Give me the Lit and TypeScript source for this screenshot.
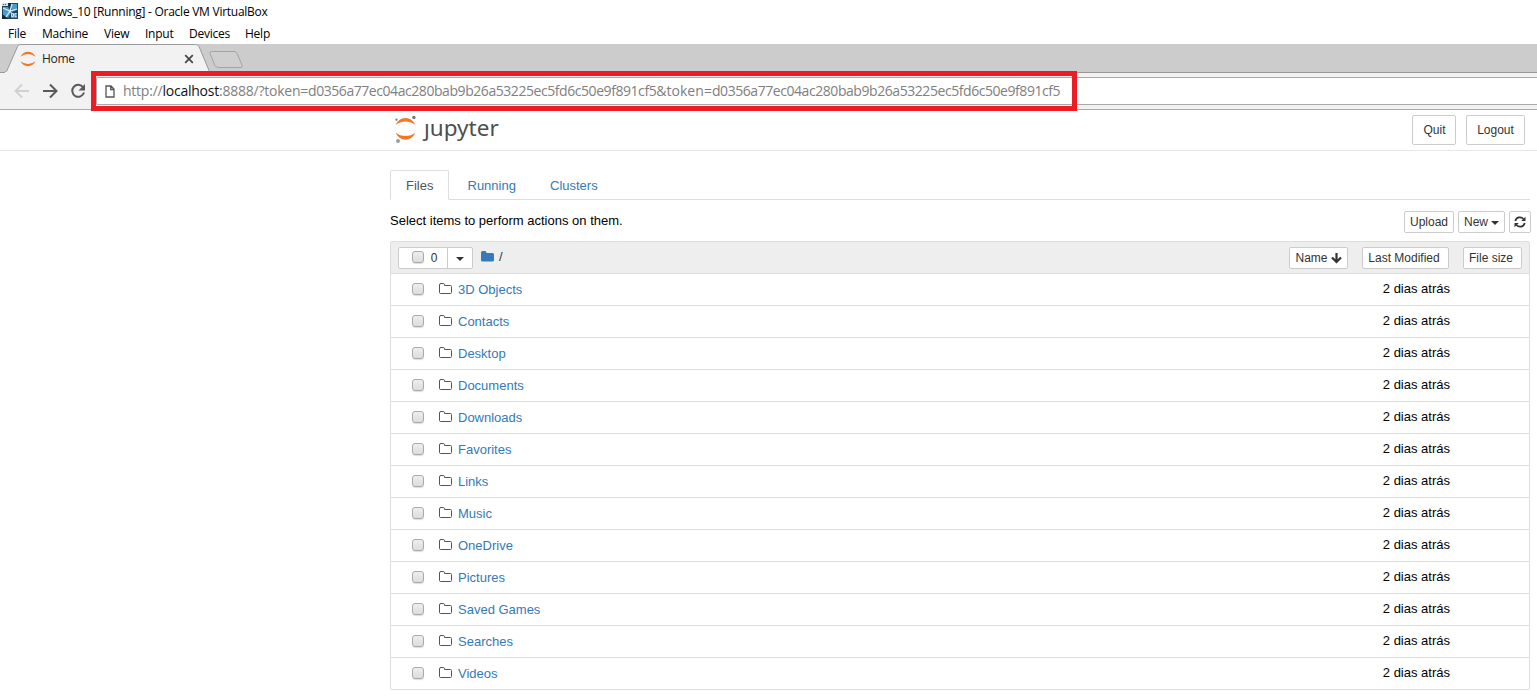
import { LitElement, html, css, svg } from "lit";
import { customElement } from "lit/decorators.js";

const FOLDERS = ["3D Objects", "Contacts", "Desktop", "Documents", "Downloads", "Favorites", "Links", "Music", "OneDrive", "Pictures", "Saved Games", "Searches", "Videos"];
const TOKEN = "d0356a77ec04ac280bab9b26a53225ec5fd6c50e9f891cf5";
const MENUS: [string, number][] = [["File", 34], ["Machine", 62], ["View", 41], ["Input", 44], ["Devices", 56], ["Help", 40]];

const reset = css`
  :host { display: block; box-sizing: border-box; }
  *, *::before, *::after { box-sizing: border-box; }
  svg { display: block; flex: none; }
`;

@customElement("vm-titlebar")
export class VmTitlebar extends LitElement {
  static styles = [reset, css`
    :host { background: #fff; color: #000; height: 44px; font: 12px/16px "Open Sans", "Noto Sans", sans-serif; }
    .title { display: flex; height: 24px; padding: 3px 0 0 2px; gap: 5px; }
    .name { font-size: 12px; letter-spacing: -0.26px; line-height: 17px; white-space: nowrap; }
    .menu { display: flex; height: 20px; padding: 2px 0 0 8px; }
    .item { font-size: 12px; letter-spacing: -0.24px; white-space: nowrap; }
  `];
  render() {
    return html`
      <div class="title">
        <svg width="16" height="16" viewBox="0 0 16 16">
          <path fill="#1d4566" d="M0 0h16v16H0z"/>
          <path fill="#4a9acb" d="M1 4h5l3 5-3 6H1zM9 1h6v6l-5 2z"/>
          <path fill="#12283c" d="M0 11l6 4v1H0zM6 0h3l-1 5z"/>
          <path fill="none" stroke="#d5edf8" stroke-width="1.300" d="M10 1L8 8l-4 6M1 5l7 3 7-2M8 8l2 3"/>
          <path fill="#5c8db0" d="M9 10h6v5H9z"/>
          <path fill="none" stroke="#d0e2ee" d="M9.500 10.500h2v3h-2zM14.500 10.500h-1.500v3h1.500"/>
          <path fill="#cfdce5" d="M0 0h6v3H0z"/><path fill="#50677a" d="M1 1h1v1H1zM3 1h1v1H3z"/>
        </svg>
        <span class="name">Windows_10 [Running] - Oracle VM VirtualBox</span>
      </div>
      <div class="menu">${MENUS.map(([t, w]) => html`<span class="item" style="width:${w}px">${t}</span>`)}</div>`;
  }
}

@customElement("browser-chrome")
export class BrowserChrome extends LitElement {
  static styles = [reset, css`
    :host { position: relative; height: 66px; font-family: "Open Sans", "Noto Sans", sans-serif; }
    .strip { position: relative; height: 29px; background: #ccc; border-bottom: 1px solid #999; display: flex; align-items: center; padding-left: 20px; }
    .shape { position: absolute; left: 0; top: 0; }
    .fav, .label, .close { position: relative; }
    .label { margin-left: 6px; width: 142px; font-size: 12px; letter-spacing: -0.3px; color: #222; line-height: 16px; padding-top: 2px; }
    .close, .fav { margin-top: 2px; }
    .bar { height: 37px; background: #f2f2f2; border-bottom: 1px solid #aaa; display: flex; padding: 4px 0 0 14px; }
    .nav { margin-top: 6px; margin-right: 12px; }
    .omni { flex: 1; height: 28px; border: 1px solid #a9a9a9; border-right: 0; border-radius: 2px 0 0 2px; background: #fff; display: flex; align-items: center; padding-left: 8px; margin-left: -2px; }
    .url { margin-left: 8px; color: #808080; font-size: 14px; letter-spacing: -0.235px; line-height: 20px; white-space: nowrap; }
    .host { color: #111; }
    .hash { letter-spacing: -0.44px; }
    .param { letter-spacing: 0.04px; }
    .mark { position: absolute; left: 91px; top: 27px; width: 986px; height: 40px; border: 5px solid #ed1c24; z-index: 2; }
  `];
  render() {
    return html`
      <div class="strip">
        <svg class="shape" width="260" height="29" viewBox="0 0 260 29">
          <path fill="#f2f2f2" stroke="#999" d="M0 28.500H4Q6 28.500 7 26.500L17.500 2.500Q18.500 .5 20.500 .5H195.500Q198 .5 199 2.500L209 26.500Q210 28.500 212 28.500"/>
          <path fill="#f2f2f2" d="M5 28h206v1H5z"/>
          <path fill="#cfcfcf" stroke="#a3a3a3" d="M211.500 7.500H234Q236 7.500 237 9.500L242 21Q243 23.500 241 23.500H219Q216 23.500 215 21.500L210 9.500Q209.500 7.500 211.500 7.500Z"/>
        </svg>
        <svg class="fav" width="16" height="16" viewBox="0 0 16 16"><path fill="#f37726" d="M.5 5.700Q3 .8 8 .8T15.500 5.700Q12 3 8 3T.5 5.700M.5 10.300Q3 15.200 8 15.200T15.500 10.300Q12 13 8 13T.5 10.300"/></svg>
        <span class="label">Home</span>
        <svg class="close" width="10" height="10" viewBox="0 0 10 10"><path stroke="#444" stroke-width="1.700" d="M1.200 1.200l7.600 7.600M8.800 1.200l-7.600 7.600"/></svg>
      </div>
      <div class="bar">
        <svg class="nav" width="16" height="16" viewBox="0 0 16 16"><path fill="none" stroke="#d0d0d0" stroke-width="1.800" d="M15 8H2M8 1.500L1.500 8 8 14.500"/></svg>
        <svg class="nav" width="16" height="16" viewBox="0 0 16 16"><path fill="none" stroke="#5a5a5a" stroke-width="2" d="M1 8h13M8 1.500L14.500 8 8 14.500"/></svg>
        <svg class="nav" width="16" height="16" viewBox="0 0 16 16"><path fill="none" stroke="#5a5a5a" stroke-width="2" d="M13.200 4.400A6 6 0 1 0 14 9.500"/><path fill="#5a5a5a" d="M15 1v6.500H8.500z"/></svg>
        <div class="omni">
          <svg width="10" height="13" viewBox="0 0 10 13"><path fill="none" stroke="#555" stroke-width="1.300" d="M1 1h5l3 3v8H1zM5.700 1v3.500H9"/></svg>
          <span class="url">http://<span class="host">localhost</span>:8888/?token=<span class="hash">${TOKEN}</span><span class="param">&amp;token=</span><span class="hash">${TOKEN}</span></span>
        </div>
      </div>
      <div class="mark"></div>`;
  }
}

const folder = svg`<path fill="none" stroke="#555" stroke-width="1" d="M.5 2Q.5 .5 2 .5H4.500Q5.500 .5 5.500 2.500H11.500Q12.500 2.500 12.500 3.500V9.500Q12.500 10.500 11.500 10.500H1.500Q.5 10.500 .5 9.500Z"/>`;

@customElement("jupyter-page")
export class JupyterPage extends LitElement {
  static styles = [reset, css`
    :host { background: #fff; color: #000; height: 590px; font: 13px/18px "Liberation Sans", Arial, sans-serif; }
    .header { height: 41px; border-bottom: 1px solid #e7e7e7; display: flex; padding: 5px 12px 0 394px; }
    .word { font: 22.500px/28px "Noto Sans", "Open Sans", sans-serif; color: #4e4e4e; margin: -1px auto 0 7px; }
    .btn { background: #fff; border: 1px solid #ccc; border-radius: 2px; color: #333; display: flex; align-items: center; justify-content: center; white-space: nowrap; flex: none; }
    .sm { height: 22px; font-size: 12px; }
    .quit { width: 44px; height: 30px; font-size: 12px; padding-left: 1px; }
    .logout { width: 59px; height: 30px; margin-left: 10px; font-size: 12px; }
    .tabs { margin: 19px 7px 0 390px; height: 30px; border-bottom: 1px solid #ddd; display: flex; color: #337ab7; line-height: 31px; }
    .active { width: 59px; height: 30px; border: 1px solid #ddd; border-bottom-color: #fff; border-radius: 2px 2px 0 0; color: #555; padding-left: 15px; line-height: 29px; }
    .t2 { margin-left: 18.500px; width: 82.500px; }
    .tools { display: flex; height: 41px; padding: 11px 6px 0 390px; }
    .hint { margin: 1px auto 0 0; }
    .up { width: 50px; } .new { width: 47px; margin: 0 4px 0 4px; gap: 3px; } .ref { width: 22px; }
    .new svg, .drop svg { margin-top: 1px; }
    .list { margin: 0 7px 0 390px; height: 449px; border: 1px solid #ddd; border-radius: 2px; }
    .head { height: 32px; background: #eee; border-bottom: 1px solid #ddd; display: flex; padding: 5px 7px 0 7px; }
    .sel { width: 50px; border-radius: 2px 0 0 2px; gap: 7px; padding-left: 3px; font-size: 12px; }
    .drop { width: 26px; margin-left: -1px; border-radius: 0 2px 2px 0; }
    .crumb { display: flex; gap: 5px; margin: 0 auto 0 8px; color: #333; }
    .crumb svg { margin-top: 4px; }
    .crumb span { margin-top: 1px; }
    .name { width: 59px; gap: 3px; } .mod { width: 87px; margin: 0 14px; padding-right: 3px; } .size { width: 59px; padding-right: 3px; }
    .row { height: 32px; border-bottom: 1px solid #ddd; display: flex; padding: 7px 79px 0 21px; color: #337ab7; }
    .row:last-child { border-bottom: 0; height: 31px; }
    .box { width: 12px; height: 12px; border: 1px solid #aaa; border-radius: 3px; background: linear-gradient(#eee, #dcdcdc); box-shadow: 0 1px 1px #ddd; flex: none; }
    .sel .box { margin-top: -2px; }
    .row .box { margin-top: 2px; }
    .row svg { margin: 2px 6px 0 15px; }
    .date { margin: -1px 0 0 auto; color: #000; }
  `];
  render() {
    const caret = html`<svg width="8" height="4" viewBox="0 0 8 4"><path fill="#333" d="M0 0h8L4 4z"/></svg>`;
    return html`
      <div class="header">
        <svg width="23" height="28" viewBox="0 0 23 28">
          <path fill="#f37726" d="M1.500 10Q5 3 11.500 3T21.500 10Q17 6.500 11.500 6.500T1.500 10M1.500 17.500Q5 24.700 11.500 24.700T21.500 17.500Q17 21 11.500 21T1.500 17.500"/>
          <circle cx="19.900" cy="2.500" r="1.700" fill="#767677"/><circle cx="2.500" cy="4.700" r="1.100" fill="#767677"/><circle cx="4" cy="26" r="2" fill="#9e9e9e"/>
        </svg>
        <span class="word">ȷupyter</span>
        <span class="btn quit">Quit</span><span class="btn logout">Logout</span>
      </div>
      <div class="tabs"><span class="active">Files</span><span class="t2">Running</span><span>Clusters</span></div>
      <div class="tools">
        <span class="hint">Select items to perform actions on them.</span>
        <span class="btn sm up">Upload</span><span class="btn sm new">New ${caret}</span>
        <span class="btn sm ref"><svg width="12" height="12" viewBox="0 0 12 12"><path fill="none" stroke="#333" stroke-width="1.700" d="M1.300 5A4.700 4.700 0 0 1 9.500 3M10.700 7A4.700 4.700 0 0 1 2.500 9"/><path fill="#333" d="M11.500 .7V5H7.200zM.5 11.300V7h4.300z"/></svg></span>
      </div>
      <div class="list">
        <div class="head">
          <span class="btn sm sel"><span class="box"></span>0</span><span class="btn sm drop">${caret}</span>
          <span class="crumb"><svg width="13" height="11" viewBox="0 0 13 11"><path fill="#337ab7" d="M0 1.500Q0 0 1.500 0H4Q5.500 0 5.500 2H11.500Q13 2 13 3.500V9Q13 10.500 11.500 10.500H1.500Q0 10.500 0 9Z"/></svg><span>/</span></span>
          <span class="btn sm name">Name <svg width="11" height="11" viewBox="0 0 11 11"><path fill="none" stroke="#333" stroke-width="2.200" d="M5.500 0v8.500M1 4.500L5.500 9 10 4.500"/></svg></span>
          <span class="btn sm mod">Last Modified</span><span class="btn sm size">File size</span>
        </div>
        ${FOLDERS.map((f) => html`<div class="row"><span class="box"></span><svg width="13" height="11" viewBox="0 0 13 11">${folder}</svg><span>${f}</span><span class="date">2 dias atrás</span></div>`)}
      </div>`;
  }
}

@customElement("app-root")
export class AppRoot extends LitElement {
  static styles = [reset, css`:host { height: 700px; overflow: hidden; background: #fff; }`];
  render() {
    return html`<vm-titlebar></vm-titlebar><browser-chrome></browser-chrome><jupyter-page></jupyter-page>`;
  }
}
